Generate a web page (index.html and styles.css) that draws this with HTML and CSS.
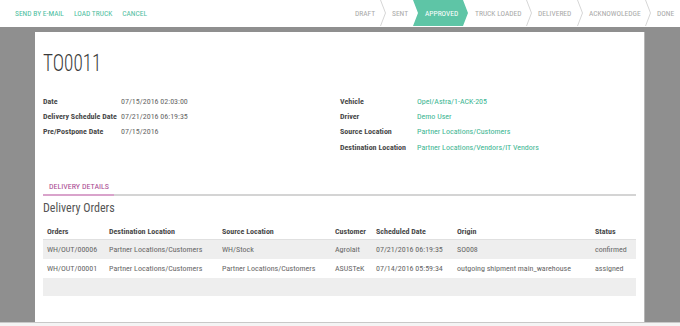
FILE: index.html
```html
<!DOCTYPE html>
<html>
<head>
<meta charset="utf-8">
<link rel="stylesheet" href="styles.css">
</head>
<body>
<div class="page">
  <header class="topbar">
    <div class="actions">
      <a class="btn">Send by e-mail</a>
      <a class="btn">Load truck</a>
      <a class="btn">Cancel</a>
    </div>
    <div class="statusbar">
      <span class="st w-draft">Draft</span>
      <svg class="chev" width="6" height="26" viewBox="0 0 6 26"><polyline points="0.5,0 5.5,13 0.5,26" fill="none" stroke="#d6d6d6" stroke-width="1"/></svg>
      <span class="st w-sent">Sent</span>
      <span class="st active">Approved</span>
      <span class="st w-truck">Truck loaded</span>
      <svg class="chev" width="6" height="26" viewBox="0 0 6 26"><polyline points="0.5,0 5.5,13 0.5,26" fill="none" stroke="#d6d6d6" stroke-width="1"/></svg>
      <span class="st w-delivered">Delivered</span>
      <svg class="chev" width="6" height="26" viewBox="0 0 6 26"><polyline points="0.5,0 5.5,13 0.5,26" fill="none" stroke="#d6d6d6" stroke-width="1"/></svg>
      <span class="st w-ack">Acknowoledge</span>
      <svg class="chev" width="6" height="26" viewBox="0 0 6 26"><polyline points="0.5,0 5.5,13 0.5,26" fill="none" stroke="#d6d6d6" stroke-width="1"/></svg>
      <span class="st w-done">Done</span>
    </div>
  </header>
  <main class="main">
    <section class="sheet">
      <h1 class="title">TO0011</h1>
      <div class="groups">
        <div class="group left">
          <div class="lbl">Date</div><div class="val">07/15/2016 02:03:00</div>
          <div class="lbl">Delivery Schedule Date</div><div class="val">07/21/2016 06:19:35</div>
          <div class="lbl">Pre/Postpone Date</div><div class="val">07/15/2016</div>
        </div>
        <div class="group right">
          <div class="lbl">Vehicle</div><div class="val link">Opel/Astra/1-ACK-205</div>
          <div class="lbl">Driver</div><div class="val link">Demo User</div>
          <div class="lbl">Source Location</div><div class="val link">Partner Locations/Customers</div>
          <div class="lbl">Destination Location</div><div class="val link">Partner Locations/Vendors/IT Vendors</div>
        </div>
      </div>
      <nav class="tabs">
        <span class="tab">Delivery Details</span>
      </nav>
      <h2 class="subtitle">Delivery Orders</h2>
      <table class="grid">
        <thead>
          <tr>
            <th class="c1">Orders</th>
            <th class="c2">Destination Location</th>
            <th class="c3">Source Location</th>
            <th class="c4">Customer</th>
            <th class="c5">Scheduled Date</th>
            <th class="c6">Origin</th>
            <th class="c7">Status</th>
          </tr>
        </thead>
        <tbody>
          <tr class="odd">
            <td>WH/OUT/00006</td>
            <td>Partner Locations/Customers</td>
            <td>WH/Stock</td>
            <td>Agrolait</td>
            <td>07/21/2016 06:19:35</td>
            <td>SO008</td>
            <td>confirmed</td>
          </tr>
          <tr>
            <td>WH/OUT/00001</td>
            <td>Partner Locations/Customers</td>
            <td>Partner Locations/Customers</td>
            <td>ASUSTeK</td>
            <td>07/14/2016 05:59:34</td>
            <td>outgoing shipment main_warehouse</td>
            <td>assigned</td>
          </tr>
          <tr class="odd empty">
            <td colspan="7"></td>
          </tr>
        </tbody>
      </table>
    </section>
  </main>
  <div class="bottomline"></div>
</div>
</body>
</html>
```
FILE: styles.css
```css
* { box-sizing: border-box; }
html, body { margin: 0; padding: 0; }
body {
  font-family: "Roboto Condensed", "Liberation Sans Narrow", "DejaVu Sans Condensed", Roboto, sans-serif;
  font-stretch: condensed;
  color: #555;
  background: #fff;
}
.page {
  width: 680px;
  height: 326px;
  display: flex;
  flex-direction: column;
  overflow: hidden;
}
.topbar {
  height: 27px;
  flex: none;
  display: flex;
  justify-content: space-between;
  align-items: stretch;
  background: #fff;
}
.actions {
  display: flex;
  align-items: center;
  gap: 10px;
  padding-left: 15px;
  padding-bottom: 1px;
}
.btn {
  font-size: 7.5px;
  text-transform: uppercase;
  color: #4dbd9e;
}
.statusbar {
  display: flex;
  align-items: stretch;
  height: 26px;
  padding-right: 7px;
}
.st {
  display: flex;
  align-items: center;
  flex: none;
  font-size: 7.5px;
  text-transform: uppercase;
  color: #a8a8a8;
  white-space: nowrap;
}
.w-draft { width: 19px; }
.w-sent { width: 16px; }
.w-truck { width: 45px; }
.w-delivered { width: 33px; }
.w-ack { width: 50px; }
.w-done { width: 16px; }
.chev { flex: none; display: block; margin: 0 6px 0 6px; }
.st.active {
  width: 55px;
  background: #5ec5a6;
  color: #fff;
  padding: 0 0 0 12px;
  margin-left: 5px;
  margin-right: 7px;
  clip-path: polygon(0 0, calc(100% - 5px) 0, 100% 50%, calc(100% - 5px) 100%, 0 100%, 5px 50%);
}
.main {
  flex: 1;
  background: #8f8f8f;
  padding: 5px 0 0 35px;
  display: flex;
  min-height: 0;
}
.sheet {
  width: 610px;
  background: #fff;
  border-right: 1px solid #b5b5b5;
  padding: 17px 8px 0 8px;
}
.title {
  margin: 0;
  font-size: 24px;
  line-height: 28px;
  font-weight: 300;
  color: #3a3a3a;
  font-family: Roboto, sans-serif;
  transform: scaleX(0.8);
  transform-origin: left center;
}
.groups {
  display: grid;
  grid-template-columns: 297px 1fr;
  margin-top: 17px;
}
.group {
  display: grid;
  grid-template-columns: 78px 1fr;
  grid-auto-rows: 15.2px;
  align-items: center;
  font-size: 8px;
}
.group.right { grid-template-columns: 77px 1fr; }
.lbl { font-weight: bold; color: #4a4a4a; white-space: nowrap; }
.val { color: #666; white-space: nowrap; }
.val.link { color: #3bb592; }
.tabs {
  margin-top: 27px;
  border-bottom: 2px solid #d4d4d4;
  display: flex;
}
.tab {
  font-size: 8px;
  text-transform: uppercase;
  color: #a8468f;
  white-space: nowrap;
  padding: 0 5px 3px 6px;
  margin-bottom: -2px;
  border-bottom: 2px solid #d9a3cb;
}
.subtitle {
  margin: 4px 0 0 0;
  font-size: 12px;
  line-height: 16px;
  font-weight: normal;
  color: #555;
}
.grid {
  width: 100%;
  border-collapse: collapse;
  margin-top: 7px;
  font-size: 8px;
}
.grid th, .grid td {
  text-align: left;
  padding: 0 0 0 4px;
  white-space: nowrap;
}
.grid th {
  height: 17px;
  font-weight: bold;
  color: #4a4a4a;
  border-bottom: 1px solid #e0e0e0;
}
.grid td { height: 19px; color: #666; }
.grid tr.odd td { background: #eeeeee; }
.grid tr.empty td { height: 18px; }
.c1 { width: 62px; }
.c2 { width: 113px; }
.c3 { width: 113px; }
.c4 { width: 41px; }
.c5 { width: 81px; }
.c6 { width: 138px; }
.bottomline {
  height: 4px;
  flex: none;
  border-top: 1px solid #c8c8c8;
  background: #f4f4f4;
}
```
